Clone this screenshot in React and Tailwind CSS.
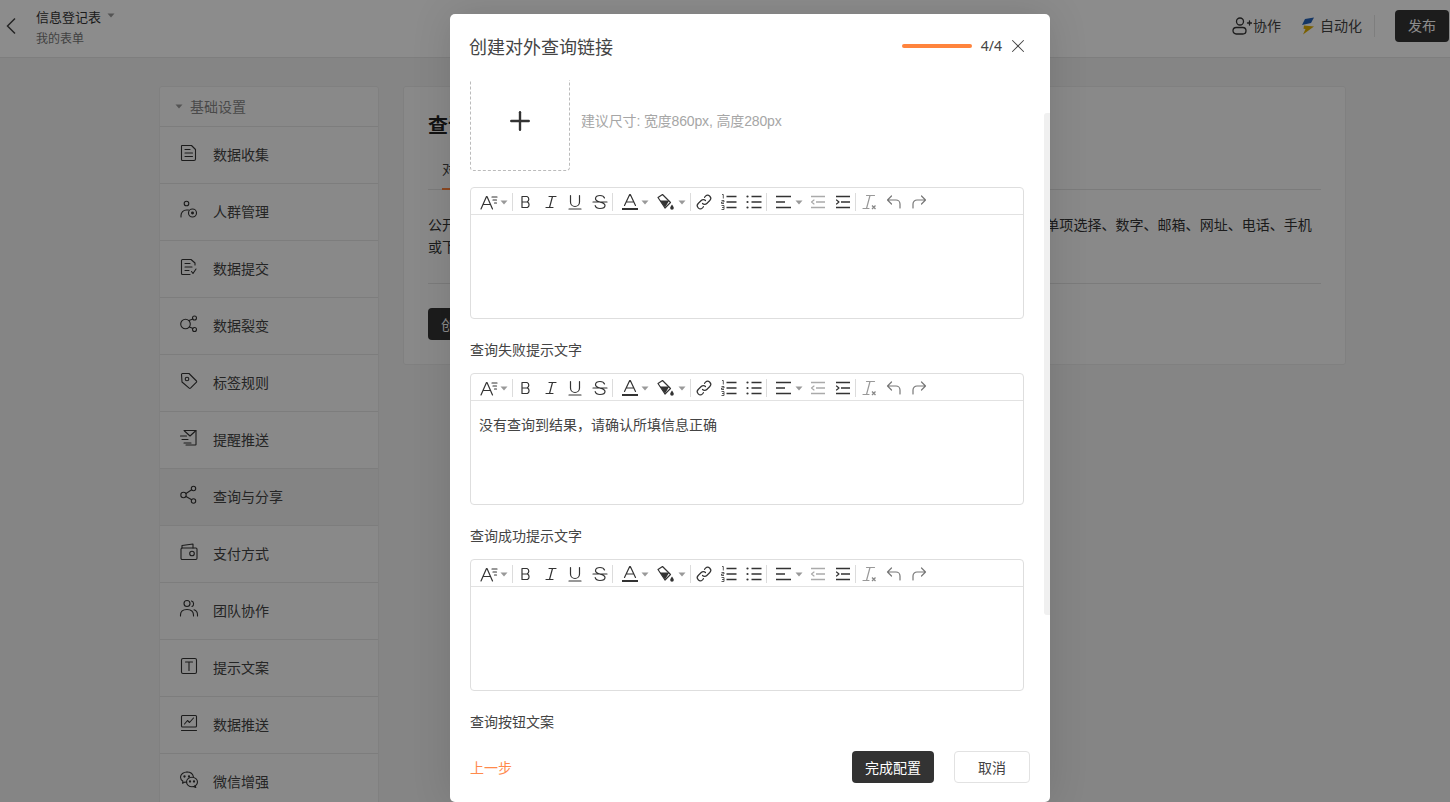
import { Plus, X } from 'lucide-react';

const s = { fill: 'none', stroke: 'currentColor', strokeWidth: 1.1, strokeLinecap: 'round', strokeLinejoin: 'round' };

function Caret({ className = '' }) {
  return (
    <svg width="8" height="5" viewBox="0 0 8 5" className={className}>
      <path d="M0.5 0.5h7L4 4.5z" fill="currentColor" />
    </svg>
  );
}

const sideIcons = {
  doc: <g {...s}><path d="M3 2.500h9.500l4 4V16a1.500 1.500 0 0 1-1.500 1.500H3.500A1 1 0 0 1 2.500 16.500V3a.5.5 0 0 1 .5-.5z" /><path d="M6 6.500h5M6 10h7.500M6 13.500h7.500" /></g>,
  people: <g {...s}><circle cx="7.500" cy="3.500" r="2.300" /><path d="M2 17v-1.500c0-3.200 2.300-5.500 5.500-5.500h2" /><circle cx="13.500" cy="13" r="4" /><circle cx="13.500" cy="13" r=".9" fill="currentColor" /></g>,
  submit: <g {...s}><path d="M16 8V6l-4-3.500H3.500a1 1 0 0 0-1 1V16.500a1 1 0 0 0 1 1H11" /><path d="M6 6.500h5M6 10h7M6 13.500h4M12.500 14.500l1.500 2 3-4.500" /></g>,
  fission: <g {...s}><circle cx="6.500" cy="10" r="4.800" /><circle cx="15.500" cy="4" r="2" /><circle cx="15.500" cy="15.500" r="2" /><path d="M10 6.500l3.800-1.500M10.500 13l3.500 1.500" /></g>,
  tag: <g {...s}><path d="M2.500 3.500a1 1 0 0 1 1-1h6.500l7.500 7.500a1 1 0 0 1 0 1.200l-6 6a1 1 0 0 1-1.300 0L3 11z" /><circle cx="8" cy="8" r="1.800" /></g>,
  mail: <g {...s}><path d="M5 2.500h11.500a.5.5 0 0 1 .5.500v13.500a.5.5 0 0 1-.500.5H7" /><path d="M5.500 3l5.500 5 6-5.500M1.500 8h6M3 11.500h6M5 15h7" /></g>,
  share: <g {...s}><circle cx="4.500" cy="10" r="2.700" /><circle cx="14.500" cy="3.500" r="2.200" /><circle cx="14.500" cy="16" r="2.200" /><path d="M7 8.500l5.700-3.800M7 11.500l5.700 3.300" /></g>,
  wallet: <g {...s}><path d="M3 6V3.500l11-1.500V6" /><rect x="2" y="6" width="16" height="11.500" rx="1.200" /><circle cx="13" cy="11.500" r="2.300" /></g>,
  team: <g {...s}><circle cx="8" cy="4.500" r="3" /><path d="M1.500 17v-1c0-3.500 2.800-5.500 6.500-5.500s6.500 2 6.500 5.500v1" /><path d="M12.500 2a3 3 0 0 1 .5 5.500M15 10.800c2.200.7 3.500 2.400 3.500 5V17" /></g>,
  text: <g {...s}><rect x="2.500" y="2.500" width="15" height="15" rx="1.500" /><path d="M6.500 6h7M10 6v8.500" /></g>,
  chart: <g {...s}><rect x="2.500" y="2.500" width="15" height="11.500" rx="1" /><path d="M5.500 11l3-3.500 2 2 4-4.500M2.500 17.500h15" /></g>,
  wechat: <g {...s}><path d="M8 2C4.500 2 1.500 4.300 1.500 7.200c0 1.700 1 3.100 2.500 4l-.5 2 2.500-1.200c.6.100 1.200.2 1.700.2" /><path d="M14.500 7c-.6-2.900-3.300-5-6.500-5" /><ellipse cx="13" cy="12" rx="5.500" ry="4.700" /><path d="M16 15.500l.8 2-2.500-1" /><circle cx="5.500" cy="6.500" r=".6" fill="currentColor" /><circle cx="10" cy="6.500" r=".6" fill="currentColor" /><circle cx="11" cy="11.500" r=".6" fill="currentColor" /><circle cx="15" cy="11.500" r=".6" fill="currentColor" /></g>,
};

const menu = [
  ['doc', '数据收集'],
  ['people', '人群管理'],
  ['submit', '数据提交'],
  ['fission', '数据裂变'],
  ['tag', '标签规则'],
  ['mail', '提醒推送'],
  ['share', '查询与分享', true],
  ['wallet', '支付方式'],
  ['team', '团队协作'],
  ['text', '提示文案'],
  ['chart', '数据推送'],
  ['wechat', '微信增强'],
];

function Icon18({ children, className = '' }) {
  return (
    <svg width="18" height="18" viewBox="0 0 18 18" className={className}>
      {children}
    </svg>
  );
}

const line = { fill: 'none', stroke: 'currentColor', strokeWidth: 1.2, strokeLinecap: 'round', strokeLinejoin: 'round' };

function Btn({ children, className = 'text-[#333]' }) {
  return <span className={`flex w-[25px] shrink-0 items-center justify-center ${className}`}>{children}</span>;
}

function Sep() {
  return <span className="block h-[18px] w-px shrink-0 bg-[#dcdcdc]" />;
}

function Toolbar() {
  return (
    <div className="flex h-[27px] items-center border-b border-[#e2e2e2] pl-[8px] pt-[2px] text-[#333]">
      <span className="flex w-[30px] shrink-0 items-center pl-[1px]">
        <Icon18 className="shrink-0">
          <g {...line}><path d="M1 16L6.500 3.500h.5L12.500 16M3.300 11.500h7M12 4h5M13 7h3.500M14.500 10h2" /></g>
        </Icon18>
        <Caret className="ml-[2px] shrink-0 text-[#999]" />
      </span>
      <span className="ml-[3px]"><Sep /></span>
      <Btn>
        <Icon18><path d="M5 3.500h5a3 3 0 0 1 0 5.500H5zM5 9h5.500a3.200 3.200 0 0 1 0 5.500H5z" {...line} /></Icon18>
      </Btn>
      <Btn>
        <Icon18><path d="M7 3.500h7M4 14.500h7M10.500 3.500l-3 11" {...line} /></Icon18>
      </Btn>
      <Btn className="-ml-px text-[#333]">
        <Icon18><path d="M4.500 2.500v6.500a4.500 4.500 0 0 0 9 0V2.500M3 16h12" {...line} /></Icon18>
      </Btn>
      <Btn>
        <Icon18><path d="M13.500 5c-.5-1.500-2.300-2.500-4.500-2.500-2.500 0-4.500 1.200-4.500 3.200 0 4.300 9.500 2.500 9.500 6.800 0 2-2 3-5 3-2.500 0-4.300-1-4.800-2.800M2 9h14" {...line} /></Icon18>
      </Btn>
      <Sep />
      <span className="flex w-[39px] shrink-0 items-center pl-[8px]">
        <Icon18 className="shrink-0">
          <path d="M3.500 12.500L8.700 1.500h.6l5.200 11M5.300 9h7.400" {...line} />
          <rect x="1" y="15" width="16" height="2" fill="currentColor" />
        </Icon18>
        <Caret className="ml-[2px] shrink-0 text-[#999]" />
      </span>
      <span className="flex w-[38px] shrink-0 items-center pl-[5px]">
        <Icon18 className="shrink-0">
          <path d="M1 4.500L5.500 1.500l8 8-5.500 5.500z" {...line} />
          <path d="M2.800 7.500h9.500L8 14.500z" fill="currentColor" />
          <path d="M15 11.500c1 1.600 1.800 2.500 1.800 3.500a1.800 1.800 0 0 1-3.600 0c0-1 .8-1.900 1.800-3.500z" fill="currentColor" />
        </Icon18>
        <Caret className="ml-[3px] shrink-0 text-[#999]" />
      </span>
      <Sep />
      <Btn>
        <Icon18>
          <path d="M7.500 10.500a3 3 0 0 0 4.300 0l3-3a3 3 0 0 0-4.300-4.300L9.500 4.300" {...line} />
          <path d="M10.500 7.500a3 3 0 0 0-4.300 0l-3 3a3 3 0 0 0 4.300 4.300l1-1.100" {...line} />
        </Icon18>
      </Btn>
      <Btn>
        <Icon18>
          <path d="M6.500 3.500h10M6.500 9h10M6.500 14.500h10" fill="none" stroke="currentColor" strokeWidth="1.500" />
          <path d="M2 1.500h1.300v4M1.500 7.500h2.500v1.500h-2.500v1.500h2.500M1.500 12.500h2.500v4h-2.500M2 14.500h2" fill="none" stroke="currentColor" strokeWidth=".8" />
        </Icon18>
      </Btn>
      <Btn>
        <Icon18>
          <path d="M6.500 3.500h10M6.500 9h10M6.500 14.500h10" fill="none" stroke="currentColor" strokeWidth="1.500" />
          <circle cx="2.500" cy="3.500" r="1.100" fill="currentColor" />
          <circle cx="2.500" cy="9" r="1.100" fill="currentColor" />
          <circle cx="2.500" cy="14.500" r="1.100" fill="currentColor" />
        </Icon18>
      </Btn>
      <Sep />
      <span className="flex w-[38px] shrink-0 items-center pl-[8px]">
        <Icon18 className="shrink-0">
          <path d="M1 3.500h15M1 9h9M1 14.500h15" fill="none" stroke="currentColor" strokeWidth="1.500" />
        </Icon18>
        <Caret className="ml-[2px] shrink-0 text-[#999]" />
      </span>
      <Btn className="text-[#aaa]">
        <Icon18>
          <path d="M2 3.500h14M7 9h9M2 14.500h14" fill="none" stroke="currentColor" strokeWidth="1.300" />
          <path d="M5 7L2.500 9 5 11" {...line} />
        </Icon18>
      </Btn>
      <Btn>
        <Icon18>
          <path d="M2 3.500h14M7 9h9M2 14.500h14" fill="none" stroke="currentColor" strokeWidth="1.500" />
          <path d="M2.500 7L5 9 2.500 11" {...line} />
        </Icon18>
      </Btn>
      <Sep />
      <Btn className="text-[#999]">
        <Icon18>
          <path d="M6.500 2.500h8M3 15.500h6M10 2.500l-3.500 13" {...line} />
          <path d="M12 12.500l3.500 3.500M15.500 12.500L12 16" fill="none" stroke="#888" strokeWidth="1.300" />
        </Icon18>
      </Btn>
      <Btn className="text-[#777]">
        <Icon18><path d="M6.500 3L2.500 7l4 4M3 7h8a4 4 0 0 1 4 4v4" {...line} /></Icon18>
      </Btn>
      <Btn className="text-[#777]">
        <Icon18><path d="M11.500 3l4 4-4 4M15 7H7a4 4 0 0 0-4 4v4" {...line} /></Icon18>
      </Btn>
    </div>
  );
}

function Editor({ children }) {
  return (
    <div className="h-[132px] rounded-[4px] border border-[#dedede] bg-white">
      <Toolbar />
      {children && <div className="px-[8px] pt-[13px] text-[14px] leading-[22px] text-[#444]">{children}</div>}
    </div>
  );
}

function Field({ label, children }) {
  return (
    <>
      <div className="mt-[20px] mb-[12px] text-[14px] leading-[22px] text-[#444]">{label}</div>
      {children}
    </>
  );
}

export default function App() {
  return (
    <div className="relative h-screen overflow-hidden bg-[#f2f2f2] font-['Noto_Sans','Noto_Sans_CJK_SC',sans-serif] text-[#333]">
      <header className="flex h-[58px] items-center border-b border-[#e6e6e6] bg-white pr-[1px]">
        <svg width="12" height="18" viewBox="0 0 12 18" className="ml-[5px] -mt-[6px] text-[#444]">
          <path d="M10 1.500L2.500 9l7.500 7.500" fill="none" stroke="currentColor" strokeWidth="1.500" />
        </svg>
        <div className="ml-[19px] mt-[-3px]">
          <div className="flex items-center text-[13px] leading-[20px]">
            信息登记表
            <Caret className="ml-[6px] -mt-[2px] text-[#999]" />
          </div>
          <div className="mt-[3px] text-[12px] leading-[18px] text-[#777]">我的表单</div>
        </div>
        <div className="ml-auto -mt-[6px] flex items-center">
          <svg width="20" height="18" viewBox="0 0 20 18" className="text-[#333]">
            <g {...s} strokeWidth="1.300">
              <circle cx="8" cy="4.500" r="3.500" />
              <rect x="1" y="10.500" width="13" height="6.500" rx="3.200" />
              <path d="M15.500 6h4M17.500 4v4" />
            </g>
          </svg>
          <span className="ml-[1px] text-[14px] text-[#444]">协作</span>
          <svg width="15" height="18" viewBox="0 0 15 18" className="ml-[19px]">
            <path d="M5 2L14 0.500 11 6 2 8z" fill="#2563b8" />
            <path d="M4 8.500l10 1L3 17.500l2.500-5.500-2-.3z" fill="#e0b000" />
          </svg>
          <span className="ml-[5px] text-[14px] text-[#444]">自动化</span>
          <span className="ml-[12px] h-[22px] w-px bg-[#e6e6e6]" />
          <button className="ml-[20px] h-[32px] w-[54px] rounded-[4px] bg-[#333] text-[14px] text-white">发布</button>
        </div>
      </header>

      <div className="ml-[159px] mt-[28px] flex gap-[24px]">
        <aside className="w-[220px] shrink-0 rounded-t-[3px] border border-[#e9e9e9] bg-[#fafafa]">
          <div className="flex h-[40px] items-center border-b border-[#e4e4e4] pl-[15px] text-[14px] text-[#888]">
            <Caret className="text-[#999]" />
            <span className="ml-[7px]">基础设置</span>
          </div>
          {menu.map(([icon, label, active]) => (
            <div
              key={label}
              className={`flex h-[57px] items-center border-b border-[#e4e4e4] pb-[2px] pl-[19px] text-[14px] text-[#444] ${active ? 'bg-[#f1f1f1]' : ''}`}
            >
              <svg width="20" height="20" viewBox="0 0 20 20" className="-mt-[2px] shrink-0 text-[#333]">
                {sideIcons[icon]}
              </svg>
              <span className="ml-[14px]">{label}</span>
            </div>
          ))}
        </aside>

        <main className="h-[279px] w-[943px] shrink-0 rounded-[3px] border border-[#e9e9e9] bg-[#fafafa] px-[24px]">
          <h1 className="mt-[24px] text-[20px] font-bold leading-[30px] text-[#222]">查询与分享</h1>
          <div className="mt-[10px] flex h-[39px] border-b border-[#e0e0e0] pl-[14px]">
            <span className="h-[39px] border-b-2 border-[#ff843d] text-[14px] leading-[36px] text-[#444]">对外查询</span>
          </div>
          <p className="mt-[24px] w-[892px] text-[14px] leading-[22px] tracking-[0.03px] text-[#333]">
            公开查询可让填写者通过链接查询已提交的数据，查询条件支持的字段类型有单行文字、多行文字、单项选择、数字、邮箱、网址、电话、手机或下拉选择。
          </p>
          <div className="mt-[25px] h-px bg-[#e0e0e0]" />
          <button className="mt-[24px] h-[32px] rounded-[4px] bg-[#333] px-[13px] text-[14px] text-white">创建对外查询链接</button>
        </main>
      </div>

      <div className="absolute inset-0 bg-black/45">
        <div className="absolute left-[450px] top-[14px] flex h-[788px] w-[600px] flex-col overflow-hidden rounded-[5px] bg-white shadow-[0_0_40px_rgba(0,0,0,0.12)]">
          <div className="flex h-[66px] shrink-0 items-center px-[19px]">
            <h2 className="text-[18px] font-normal text-[#444]">创建对外查询链接</h2>
            <div className="ml-auto mr-[2px] -mt-[3px] flex items-center">
              <span className="h-[4px] w-[70px] rounded-full bg-[#ff843d]" />
              <span className="ml-[9px] text-[14px] text-[#444]">4/4</span>
              <X size={22} strokeWidth={1.1} className="ml-[5px] text-[#444]" />
            </div>
          </div>

          <div className="min-h-0 flex-1 overflow-hidden pl-[20px] pr-[26px]">
            <div className="-mt-[9px]">
              <div className="flex items-center">
                <div className="flex h-[100px] w-[100px] shrink-0 items-center justify-center rounded-[4px] border border-dashed border-[#bbb] text-[#333]">
                  <Plus size={30} strokeWidth={1.9} />
                </div>
                <span className="ml-[11px] font-['Liberation_Sans','Noto_Sans_CJK_SC',sans-serif] text-[14px] tracking-[-0.15px] text-[#a6a6a6]">建议尺寸: 宽度860px, 高度280px</span>
              </div>
              <div className="mt-[16px]">
                <Editor />
              </div>
              <Field label="查询失败提示文字">
                <Editor>没有查询到结果，请确认所填信息正确</Editor>
              </Field>
              <Field label="查询成功提示文字">
                <Editor />
              </Field>
              <Field label="查询按钮文案" />
            </div>
          </div>

          <div className="flex h-[67px] shrink-0 items-start px-[20px] pt-[16px]">
            <button className="h-[32px] text-[14px] text-[#ff8a4c]">上一步</button>
            <button className="ml-auto h-[32px] w-[82px] rounded-[4px] bg-[#333] text-[14px] text-white">完成配置</button>
            <button className="ml-[20px] h-[32px] w-[76px] rounded-[4px] border border-[#e2e2e2] bg-white text-[14px] text-[#444]">取消</button>
          </div>

          <div className="absolute right-0 top-[99px] h-[502px] w-[6px] rounded-l-[3px] bg-[#f0f0f0]" />
        </div>
      </div>
    </div>
  );
}
